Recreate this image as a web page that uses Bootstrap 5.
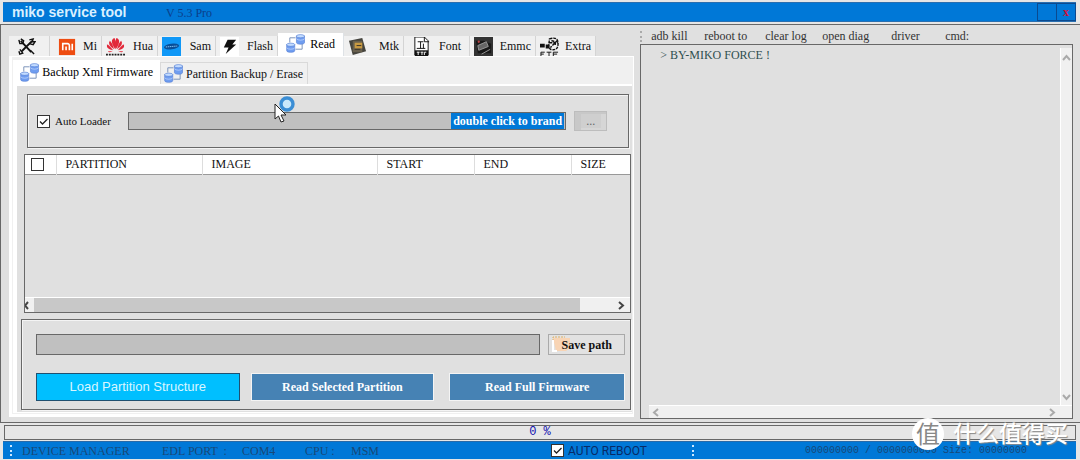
<!DOCTYPE html>
<html lang="en">
<head>
<meta charset="utf-8">
<meta name="viewport" content="width=device-width, initial-scale=1">
<title>miko service tool</title>
<link href="https://cdn.jsdelivr.net/npm/bootstrap@5.3.0/dist/css/bootstrap.min.css" rel="stylesheet">
<style>
:root{--face:#e0e0e0;--line:#686868;--blue:#0078d7;--soft:#f0f0f0}
body{font:12px/16px "Liberation Serif","Noto Sans CJK SC",serif;color:#111;background:#e6e6e6}
button,input{font:inherit;color:inherit;border-radius:0}
.app-window{min-height:100vh;overflow:hidden}
.title-strip{height:20px;margin:2px 4px 2px 3px;background:var(--blue);border-top:1px solid #2a6fb0;border-bottom:1px solid #2a6fb0}
.title-strip h1{font:bold 14px/18px "Liberation Sans",sans-serif;color:#d9f0ff;width:155px;padding-left:9px}
.version{color:#0b3f8a}
.win-btn{width:20px;background:none;border:1px solid #0b4a8f;height:18px;padding:0;line-height:16px;color:#d0103a;font-weight:bold}
.win-btn + .win-btn{border-left:0;width:19px}
.workspace{border:1px solid var(--line);border-width:1px 0 1px 1px;background:var(--face)}
.tool-pane{flex:634 1 0;min-width:0;padding:9px 0 5px 8px}
.log-pane{flex:439 1 0;min-width:0;padding:3px 7px 3px 6px}
.strip{border:0;height:22px;flex-wrap:nowrap;align-items:flex-end;padding:0}
.strip .nav-link{color:#111;border:0;border-right:1px solid #d4d4d4;border-radius:0;background:var(--soft);padding:0 4px 0 0;margin:0;height:20px;display:flex;align-items:center;justify-content:space-between;white-space:nowrap}
.strip .nav-link svg{width:19px;height:19px;flex:none}
.strip .nav-link.active{background:#fff;height:23px;padding-bottom:2px}
.w40{width:41px}.w52{width:52px}.w56{width:56px}.w58{width:58px}.w60{width:60px}.w62{width:62px}.w66{width:66px}
.outer-page{background:var(--soft);border:solid #fff;border-width:1px 1px 3px 3px;padding:3px 1px 1px 1px}
.substrip{height:24px}
.substrip .nav-link{width:148px;height:22px;padding:0 4px 0 3px;border:1px solid #d9d9d9;border-bottom:0}
.substrip .nav-link.active{width:147px;height:24px;padding:0 7px 0 7px;border:0}
.inner-page{background:var(--face);border:solid #fff;border-width:2px 0 1px 4px;padding:8px 1px 2px 4px}
.frame{border:1px solid var(--line);box-shadow:inset 1px 1px #f4f4f4,1px 1px #f4f4f4}
.loader-box{margin:0 2px 6px 6px;height:54px;padding:0 21px 0 9px}
.loader-label{font-size:11px;width:73px;margin-left:5px}
.tick{appearance:none;width:13px;height:13px;margin:0;border:1px solid #333;background:#fff;flex:none}
.tick:checked{background:#fff url("data:image/svg+xml,%3Csvg xmlns='http://www.w3.org/2000/svg' viewBox='0 0 11 11'%3E%3Cpath d='M2 5.5l2.5 2.5L9.5 3' fill='none' stroke='%23222' stroke-width='1.3'/%3E%3C/svg%3E")}
.field{height:18px;background:#c0c0c0;border:1px solid var(--line);border-radius:0;padding:0;outline:0;min-width:0}
.brand-input{width:113px;background:var(--blue);color:#fff;border:0;font-weight:bold;text-align:center;padding:0;height:16px;margin-right:1px}
.dots-btn{width:33px;height:20px;padding:0;border:1px solid #bdbdbd;background:#cfcfcf;color:#666;line-height:16px;box-shadow:inset 6px 2px #c8c8c8,inset -5px -2px #d6d6d6}
.list-frame{height:159px;margin:0 0 6px 3px;border:1px solid var(--line)}
.parts{table-layout:fixed;width:100%;background:#fff;border-bottom:1px solid #999;margin:0}
.parts th{font-weight:normal;height:19px;padding:0 0 1px 9px;border-right:1px solid #ddd}
.parts th:first-child{padding:0 0 0 6px}
.parts th:last-child{border:0}
.parts .tick{display:block}
.c1{width:31px}.c2{width:146px}.c3{width:175px}.c4{width:97px}
.hscroll{height:15px;background:var(--soft);border-top:1px solid #fff}
.hscroll svg,.arrow{width:9px;height:11px;fill:none;stroke:#444;stroke-width:2}
.hscroll .thumb{height:14px;flex:0 1 546px;background:#c8c8c8}
.actions{padding:14px 5px 8px 14px;height:91px}
.actions .field{height:21px}
.save-btn{width:77px;height:21px;border:1px solid #aaa;background:#e2e2e2;padding:0;font-weight:bold;position:relative}
.save-btn svg{position:absolute;left:3px;top:1px;width:20px;height:16px}
.save-btn span{position:relative}
.act{border:1px solid #f4f4f4;background:#4682b4;color:#fff;font-weight:bold;height:28px;padding:0;white-space:nowrap;border-radius:0;min-width:0}
.act-load{background:#00bfff;border:1px solid #205070;font:13px/16px "Liberation Sans",sans-serif;color:#d8f6ff;flex:204 1 0}
.act-sel{flex:184 1 0;margin-left:11px}
.act-full{flex:176 1 0;margin-left:15px}
.menu-row{height:16px;color:#333}
.menu-row button{border:0;background:none;padding:0;text-align:left;white-space:nowrap;color:#333;flex:none}
.cmd-input{width:0;min-width:0}
.grip{width:3px;height:11px;border-left:2px dotted #aaa;flex:none}
.m53{width:53px}.m61{width:61px}.m57{width:57px}.m69{width:69px}.m54{width:54px}
.log-frame{border:1px solid var(--line)}
.log-text{color:#2f4f4f;padding:2px 0 0 19px}
.vbar{width:12px;background:var(--soft);border-left:1px solid #fff;margin-top:3px;padding:4px 0 3px}
.hbar{height:13px;background:var(--soft);border-top:1px solid #fff;margin-left:8px;padding:0 15px 0 3px}
.arrow{stroke:#aaa}
.meter{margin:2px 4px 0 4px;height:15px;border:1px solid var(--line);background:#e6e6e6;color:#1010b0;font:12px/13px "Liberation Mono",monospace}
.status-strip{margin:1px 4px 1px 3px;height:18px;background:var(--blue);color:#184878;border-top:1px solid #286aa8}
.status-strip .grip{border-color:#cbe7ff;margin:0 9px 0 7px}
.s140{width:140px}.s80{width:80px}.s63{width:63px}.s46{width:46px}.s201{width:200px}
.reboot{font:12px/16px Roboto,sans-serif;color:#082a66;width:134px}
.counter{font:10px/16px "Liberation Mono",monospace;margin-right:49px;white-space:pre}
.foot-line{height:1px;background:#3a9ccf}
.stamp{position:absolute;right:12px;bottom:11px;color:#fff;font:500 23px/28px "Noto Sans CJK SC",sans-serif;text-shadow:1px 1px 1px #8a8a8a}
.stamp b{width:32px;height:32px;background:#fff;color:#888;font-size:24px;line-height:30px;font-weight:400;text-shadow:none;margin-right:9px;text-align:center}
.pointer{position:absolute;left:246px;top:0;width:24px;height:28px}
</style>
</head>
<body>
<svg width="0" height="0" class="position-absolute" aria-hidden="true">
<symbol id="db" viewBox="0 0 20 20"><path d="M4 9V4h6M17 9v7h-7" fill="none" stroke="#7890b8"/><g fill="#6f9df0" stroke="#4a74cf" stroke-width=".6"><path d="M11 2v7c0 2.400 8.500 2.400 8.500 0V2z"/><ellipse cx="15.200" cy="2.300" rx="4.300" ry="1.700" fill="#c3dcff"/><path d="M11 5c1 2 7.500 2 8.500 0" fill="none" stroke="#dbe8ff"/><path d="M.7 11v6.500c0 2.400 8.500 2.400 8.500 0V11z"/><ellipse cx="5" cy="11.300" rx="4.300" ry="1.700" fill="#c3dcff"/><path d="M.7 14.500c1 2 7.500 2 8.500 0" fill="none" stroke="#dbe8ff"/></g></symbol>
</svg>
<div class="app-window d-flex flex-column position-relative">
<header class="title-strip d-flex">
<h1 class="m-0 text-nowrap">miko service tool</h1>
<span class="version pt-1 lh-1 ps-2">V 5.3 Pro</span>
<div class="ms-auto d-flex"><button class="win-btn" aria-label="Minimize"></button><button class="win-btn" aria-label="Close">x</button></div>
</header>

<main class="workspace d-flex flex-grow-1">
<section class="tool-pane d-flex flex-column">
<nav class="nav nav-tabs strip">
<button class="nav-link w40" aria-label="Tools"><svg viewBox="0 0 20 20" class="ms-2"><path d="M4 4l11 12M16 4L5 15" stroke="#111" stroke-width="2"/><path d="M2 3l1 4 3 0 1-3-3-2M13 3l4-1-1 3 3 0-2 3-4-1M14 14l4 4M3 13l3 4-3 1-1-3" fill="none" stroke="#111" stroke-width="1.500"/></svg></button>
<button class="nav-link w52 ps-2"><svg viewBox="0 0 20 20"><path fill="#ee4d12" d="M1 2h17v17H1z"/><path d="M5 14V7h5c2 0 2 1 2 3v4M8.500 10v4M15 7v7" stroke="#fff" stroke-width="1.700" fill="none"/></svg>Mi</button>
<button class="nav-link w56 ps-1"><svg viewBox="0 0 20 20"><g fill="#e2293a"><path d="M9.700 13Q3 3 9 1q2 4 .7 12M10.300 13Q9 5 11 1q6 2-.7 12M8.500 13Q6 5 4 4q-3 4 4.500 9M11.500 13Q14 5 16 4q3 4-4.500 9M7.500 14Q3 8 1 8q-1 5 6.500 6M12.500 14Q17 8 19 8q1 5-6.500 6M7 15H2q1 2 5 0M13 15h5q-1 2-5 0"/></g><path d="M0 18.500h20" stroke="#222" stroke-width="2" stroke-dasharray="2 1"/></svg>Hua</button>
<button class="nav-link w58 ps-1 pe-1"><svg viewBox="0 0 20 20"><path fill="#1098f7" d="M0 0h20v20H0z"/><ellipse cx="10" cy="10" rx="8" ry="3" fill="#084e98" transform="rotate(-8 10 10)"/><path d="M4 10.500l12-1" stroke="#8cc8f5" stroke-dasharray="1.500 .7"/></svg>Sam</button>
<button class="nav-link w62 ps-1"><svg viewBox="0 0 20 20"><path fill="#fff" d="M0 0h20v20H0z"/><path d="M8 3h9l-4 5h4L6 18l3-7H4z" fill="#111"/></svg>Flash</button>
<button class="nav-link active w66 ps-2 pe-2"><svg><use href="#db"/></svg>Read</button>
<button class="nav-link w60 px-1"><svg viewBox="0 0 20 20"><path d="M1 4l14-3 4 14-14 4z" fill="#45443e"/><path d="M5 4h10v12H5z" fill="#68604e"/><path d="M7 6h8v6H7z" fill="#c89a42"/><path d="M9 9h5M7 13h6" stroke="#3b3428"/></svg>Mtk</button>
<button class="nav-link w66 px-2"><svg viewBox="0 0 20 20"><path d="M3 0h10l4 4v15H3z" fill="#fff" stroke="#111"/><path d="M13 0v5h5M6 5h6M9 5v7M12 7v5M5 12h9" stroke="#111" fill="none"/><path d="M3 14h14v6H3z" fill="#111"/><path d="M5 16h3M6.500 16v3M9 16h3M10.500 16v3M13 19v-3h2" stroke="#fff" fill="none"/></svg>Font</button>
<button class="nav-link w66 ps-1"><svg viewBox="0 0 20 20"><path fill="#333" d="M0 0h20v20H0z"/><path d="M2 4h8l8 3v10H4z" fill="#181818"/><path d="M4 9l9-4 2 5-10 4zM8 18l9-5" fill="#666" stroke="#999"/><circle cx="5" cy="5" r="1.200" fill="#b44"/></svg>Emmc</button>
<button class="nav-link w60 ps-1 pe-1"><svg viewBox="0 0 20 20"><path d="M0 7h5v4H0zM6 8h4v4H6z" fill="#111"/><path d="M10 2q9-3 9 5t-8 6l-2-3zM12 4q5 0 4 5M18 4l-7 7M10 6h9" stroke="#111" fill="none" stroke-width="1.500" stroke-dasharray="3 1"/><path d="M1 20v-4h4M1 18h3M7 16h5M9.500 16v4M14 20v-4h5M14 18h4" stroke="#111" fill="none"/></svg>Extra</button>
</nav>
<div class="outer-page flex-grow-1 d-flex flex-column">
<nav class="nav nav-tabs strip substrip">
<button class="nav-link active"><svg><use href="#db"/></svg>Backup Xml Firmware</button>
<button class="nav-link"><svg><use href="#db"/></svg>Partition Backup / Erase</button>
</nav>
<div class="inner-page flex-grow-1 d-flex flex-column">
<div class="loader-box frame d-flex align-items-center position-relative">
<input class="tick" type="checkbox" id="auto" checked><label class="loader-label text-nowrap" for="auto">Auto Loader</label>
<div class="field flex-grow-1 d-flex justify-content-end"><input class="brand-input" aria-label="Loader" value="double click to brand"></div>
<button class="dots-btn ms-2">...</button>
<svg class="pointer" viewBox="0 0 24 28"><circle cx="13" cy="9" r="6" fill="#c9e8fb" stroke="#3b8ed5" stroke-width="3.400"/><path d="M1 9v15l3.500-3 2.500 6 3-1-3-6h5z" fill="#fff" stroke="#222"/></svg>
</div>
<div class="list-frame d-flex flex-column flex-grow-1">
<table class="parts"><colgroup><col class="c1"><col class="c2"><col class="c3"><col class="c4"><col class="c4"><col></colgroup>
<thead><tr><th><input class="tick" type="checkbox" aria-label="Select all"></th><th>PARTITION</th><th>IMAGE</th><th>START</th><th>END</th><th>SIZE</th></tr></thead></table>
<div class="hscroll d-flex align-items-center mt-auto"><svg viewBox="0 0 9 11"><path d="M3 2L0 5.500 3 9"/></svg><div class="thumb"></div><svg class="ms-auto me-1" viewBox="0 0 9 11"><path d="M2 2l4 3.500L2 9"/></svg></div>
</div>
<div class="actions frame d-flex flex-column justify-content-between">
<div class="d-flex"><input class="field flex-grow-1" aria-label="Save path"><button class="save-btn ms-2"><svg viewBox="0 0 20 16"><path d="M1 2h17v10l-4 3H4z" fill="#f8d4b4"/><path d="M1 14V1h12" fill="none" stroke="#e0b060" stroke-dasharray="2 1"/><path d="M1 4v11h4" fill="none" stroke="#fff" stroke-width="2"/></svg><span>Save path</span></button></div>
<div class="d-flex"><button class="act act-load">Load Partition Structure</button><button class="act act-sel">Read Selected Partition</button><button class="act act-full">Read Full Firmware</button></div>
</div>
</div>
</div>
</section>

<section class="log-pane d-flex flex-column">
<nav class="menu-row d-flex align-items-center"><span class="grip me-2"></span><button class="m53">adb kill</button><button class="m61">reboot to</button><button class="m57">clear log</button><button class="m69">open diag</button><button class="m54">driver</button><label for="cmd">cmd:</label><input id="cmd" class="cmd-input border-0 bg-transparent p-0 flex-grow-1"></nav>
<div class="log-frame flex-grow-1 d-flex flex-column">
<div class="d-flex flex-grow-1"><div class="log-text flex-grow-1">&gt; BY-MIKO FORCE !</div>
<div class="vbar d-flex flex-column justify-content-between align-items-center"><svg class="arrow" viewBox="0 0 9 11"><path d="M1 8l3.500-4L8 8"/></svg><svg class="arrow" viewBox="0 0 9 11"><path d="M1 4l3.500 4L8 4"/></svg></div></div>
<div class="hbar d-flex justify-content-between align-items-center"><svg class="arrow" viewBox="0 0 9 11"><path d="M6 2L2 5.500 6 9"/></svg><svg class="arrow" viewBox="0 0 9 11"><path d="M2 2l4 3.500L2 9"/></svg></div>
</div>
</section>
</main>

<div class="meter text-center">0 %</div>
<footer class="status-strip d-flex align-items-center text-nowrap">
<span class="grip"></span><span class="s140">DEVICE MANAGER</span><span class="s80">EDL PORT &nbsp;:</span><span class="s63">COM4</span><span class="s46">CPU :</span><span class="s201">MSM</span>
<div class="reboot d-flex align-items-center"><input class="tick me-1" type="checkbox" id="reboot" checked><label for="reboot">AUTO REBOOT</label></div>
<span class="grip"></span><span class="counter ms-auto">000000000 / 0000000000 Size: 00000000</span>
</footer>
<div class="foot-line"></div>
<div class="stamp d-flex align-items-start"><b class="rounded-circle">值</b>什么值得买</div>
</div>
<script src="https://cdn.jsdelivr.net/npm/bootstrap@5.3.0/dist/js/bootstrap.bundle.min.js"></script>
</body>
</html>
